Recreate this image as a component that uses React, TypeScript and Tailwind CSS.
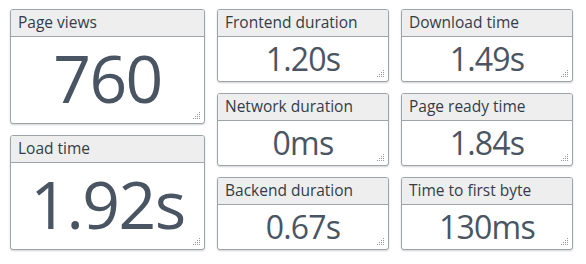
import React from "react";

interface Metric {
  title: string;
  value: string;
}

const leftMetrics: Metric[] = [
  { title: "Page views", value: "760" },
  { title: "Load time", value: "1.92s" },
];

const gridMetrics: Metric[] = [
  { title: "Frontend duration", value: "1.20s" },
  { title: "Download time", value: "1.49s" },
  { title: "Network duration", value: "0ms" },
  { title: "Page ready time", value: "1.84s" },
  { title: "Backend duration", value: "0.67s" },
  { title: "Time to first byte", value: "130ms" },
];

// dotted resize grip, like a textarea corner
const Grip = () => {
  const dots: React.ReactNode[] = [];
  for (let y = 0; y < 4; y++) {
    for (let x = 0; x < 4; x++) {
      if (x + y >= 3) {
        dots.push(<rect key={`${x}-${y}`} x={x * 2} y={y * 2} width="1" height="1" fill="#9a9a9a" />);
      }
    }
  }
  return (
    <svg width="8" height="8" viewBox="0 0 8 8" className="absolute right-[3px] bottom-[3px]">
      {dots}
    </svg>
  );
};

const Card = ({ metric, big }: { metric: Metric; big?: boolean }) => (
  <div className="relative flex flex-col flex-1 bg-white border border-[#9ea4a8] rounded-[3px] shadow-[0_1px_2px_rgba(0,0,0,0.18)] overflow-hidden">
    <div className="h-[27px] shrink-0 flex items-center px-[7px] bg-[#eeeeee] border-b border-[#9ea4a8] text-[15.5px] text-[#333d49]">
      {metric.title}
    </div>
    <div
      className={
        big
          ? "flex-1 min-h-0 flex items-center justify-center pb-[6px] text-[66px] leading-[66px] tracking-[-1.5px] text-[#4a5563]"
          : "flex-1 min-h-0 flex items-center justify-center pb-[1px] text-[32px] leading-[32px] tracking-[-0.8px] text-[#4a5563]"
      }
    >
      {metric.value}
    </div>
    <Grip />
  </div>
);

export default function App() {
  return (
    <div className="w-[586px] h-[264px] bg-white pl-[10px] pt-[9px] flex gap-[12px] font-['Open_Sans',sans-serif]">
      <div className="w-[195px] h-[241px] flex flex-col gap-[11px]">
        {leftMetrics.map((m) => (
          <Card key={m.title} metric={m} big />
        ))}
      </div>
      <div className="grid grid-cols-[172px_172px] grid-rows-[73px_73px_73px] gap-x-[12px] gap-y-[11px]">
        {gridMetrics.map((m) => (
          <Card key={m.title} metric={m} />
        ))}
      </div>
    </div>
  );
}
